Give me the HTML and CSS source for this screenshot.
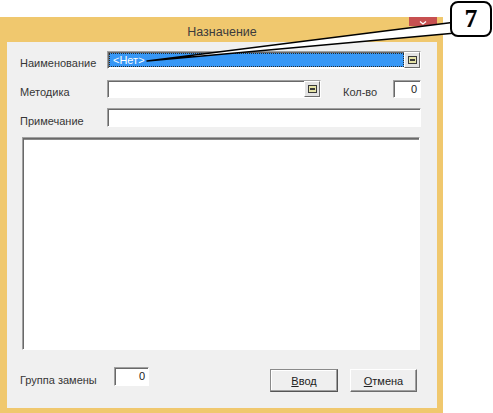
FILE: index.html
```html
<html><head>
<meta name="viewport" content="width=device-width, initial-scale=1">
<link rel="stylesheet" href="styles.css"></head><body>

<div class="page">
  <div class="window">
    <div class="titlebar">
      <span class="title">Назначение</span>
      <span class="close">
        <svg width="8" height="4" viewBox="0 0 8 4"><path d="M1 0.5 L4 3 L7 0.5" fill="none" stroke="#fff" stroke-width="1.3"/></svg>
      </span>
    </div>

    <div class="client">
      <div class="row">
        <label class="lbl">Наименование</label>
        <div class="combo combo-name">
          <div class="sel">&lt;Нет&gt;</div>
          <div class="combo-btn">
            <svg width="9" height="8" viewBox="0 0 9 8"><rect x="0.5" y="0.5" width="8" height="7" fill="#e4e2a6" stroke="#3a3a3a"/><rect x="2" y="3" width="5" height="2" fill="#3a3a3a"/></svg>
          </div>
        </div>
      </div>

      <div class="row row-method">
        <label class="lbl">Методика</label>
        <div class="combo combo-method">
          <div class="combo-text"></div>
          <div class="combo-btn">
            <svg width="9" height="8" viewBox="0 0 9 8"><rect x="0.5" y="0.5" width="8" height="7" fill="#e4e2a6" stroke="#3a3a3a"/><rect x="2" y="3" width="5" height="2" fill="#3a3a3a"/></svg>
          </div>
        </div>
        <label class="lbl lbl-qty">Кол-во</label>
        <div class="field field-qty">0</div>
      </div>

      <div class="row row-note">
        <label class="lbl">Примечание</label>
        <div class="field field-note"></div>
      </div>

      <div class="memo"></div>

      <div class="bottom">
        <label class="lbl lbl-group">Группа замены</label>
        <div class="field field-group">0</div>
        <button class="btn btn-default"><u>В</u>вод</button>
        <button class="btn btn-cancel"><u>О</u>тмена</button>
      </div>
    </div>
  </div>

  <!-- callout pointing at the name field -->
  <svg class="leader" width="493" height="413" viewBox="0 0 493 413">
    <polygon points="456,22 147,61 456,33" fill="#fff" stroke="#000" stroke-width="1.5" stroke-linejoin="round"/>
  </svg>
  <div class="callout">7</div>
</div>

</body></html>
```

FILE: styles.css
```css
body {
  margin: 0;
  background: #fff;
  font-family: "Liberation Sans", Arial, sans-serif;
  font-size: 11px;
  color: #363636;
}
.page {
  position: relative;
  width: 493px;
  height: 413px;
  overflow: hidden;
}

/* window frame */
.window {
  margin-top: 17px;
  width: 443px;
  height: 396px;
  box-sizing: border-box;
  padding: 0 6px 5px 7px;
  background: #f0c86e;
  display: flex;
  flex-direction: column;
  position: relative;
}
.titlebar {
  height: 25px;
  flex: none;
  display: flex;
  justify-content: center;
  align-items: center;
}
.title {
  font-size: 12.5px;
  color: #3c3c3c;
  padding-top: 5px;
}
.close {
  position: absolute;
  top: 0;
  right: 6px;
  width: 28px;
  height: 9px;
  background: #c75050;
  display: flex;
  justify-content: center;
  align-items: flex-end;
}
.close svg {display: block; margin-bottom: 1px;}

.client {
  flex: 1;
  background: #f0f0f0;
  padding: 9px 0 0 13px;
  display: flex;
  flex-direction: column;
}

/* form rows */
.row {
  display: flex;
  align-items: flex-end;
  height: 18px;
}
.row-method {margin-top: 11px;}
.row-note {margin-top: 10px; height: 19px;}

.lbl {
  width: 87px;
  line-height: 13px;
  margin-bottom: -1px;
  flex: none;
}
.lbl-qty {margin-left: 22px; width: 50px;}

/* sunken edit look */
.combo, .field, .memo {
  box-sizing: border-box;
  background: #fff;
  border: 1px solid;
  border-color: #a0a0a0 #fff #fff #a0a0a0;
  box-shadow: inset 1px 1px 0 #696969;
  flex: none;
}
.combo {
  display: flex;
  height: 18px;
}
.combo-name {width: 314px;}
.combo-method {width: 214px;}
.combo-text {flex: 1;}

.sel {
  flex: 1;
  margin: 1px 0 1px 1px;
  background: #3797f5;
  border: 1px dotted #2a2a2a;
  color: #fff;
  padding-left: 3px;
  line-height: 12px;
}
.combo-btn {
  width: 16px;
  box-sizing: border-box;
  background: #e3e3e3;
  border: 1px solid;
  border-color: #fff #6d6d6d #6d6d6d #fff;
  display: flex;
  align-items: center;
  justify-content: center;
}
.combo-btn svg {display: block;}

.field {
  text-align: right;
  padding: 2px 3px 0 0;
  line-height: 12px;
  color: #222;
}
.field-qty {width: 28px; height: 18px;}
.field-note {width: 314px; height: 19px;}

.memo {
  margin: 10px 0 0 2px;
  width: 398px;
  height: 213px;
  box-shadow: inset 1px 1px 0 #696969, inset 0 2px 0 #8a8a8a;
}

/* bottom line with buttons */
.bottom {
  display: flex;
  align-items: flex-start;
  margin-top: 17px;
}
.lbl-group {width: 94px; margin: 7px 0 0 0;}
.field-group {width: 35px; height: 19px;}

.btn {
  box-sizing: border-box;
  height: 23px;
  margin-top: 2px;
  padding: 0;
  background: #efefef;
  border: 1px solid;
  border-color: #fff #6d6d6d #6d6d6d #fff;
  box-shadow: inset -1px -1px 0 #a0a0a0;
  font-family: "Liberation Sans", Arial, sans-serif;
  font-size: 11px;
  color: #222;
  display: flex;
  align-items: center;
  justify-content: center;
}
.btn-default {
  width: 68px;
  margin-left: 121px;
  border-color: #8a8a8a #555 #555 #8a8a8a;
  box-shadow: inset -1px -1px 0 #a0a0a0, inset 1px 1px 0 #fff;
}
.btn-cancel {width: 67px; margin-left: 12px;}

/* numbered callout */
.leader {
  position: absolute;
  top: 0;
  left: 0;
  pointer-events: none;
}
.callout {
  position: absolute;
  left: 450px;
  top: 1px;
  width: 42px;
  height: 36px;
  box-sizing: border-box;
  border: 2px solid #000;
  border-radius: 8px;
  background: #fff;
  font-family: "Liberation Serif", "Times New Roman", serif;
  font-weight: bold;
  font-size: 25px;
  line-height: 32px;
  text-align: center;
  color: #000;
  text-shadow: -0.6px 0 rgba(0, 90, 255, 0.45), 0.6px 0 rgba(255, 140, 0, 0.45);
}
```
